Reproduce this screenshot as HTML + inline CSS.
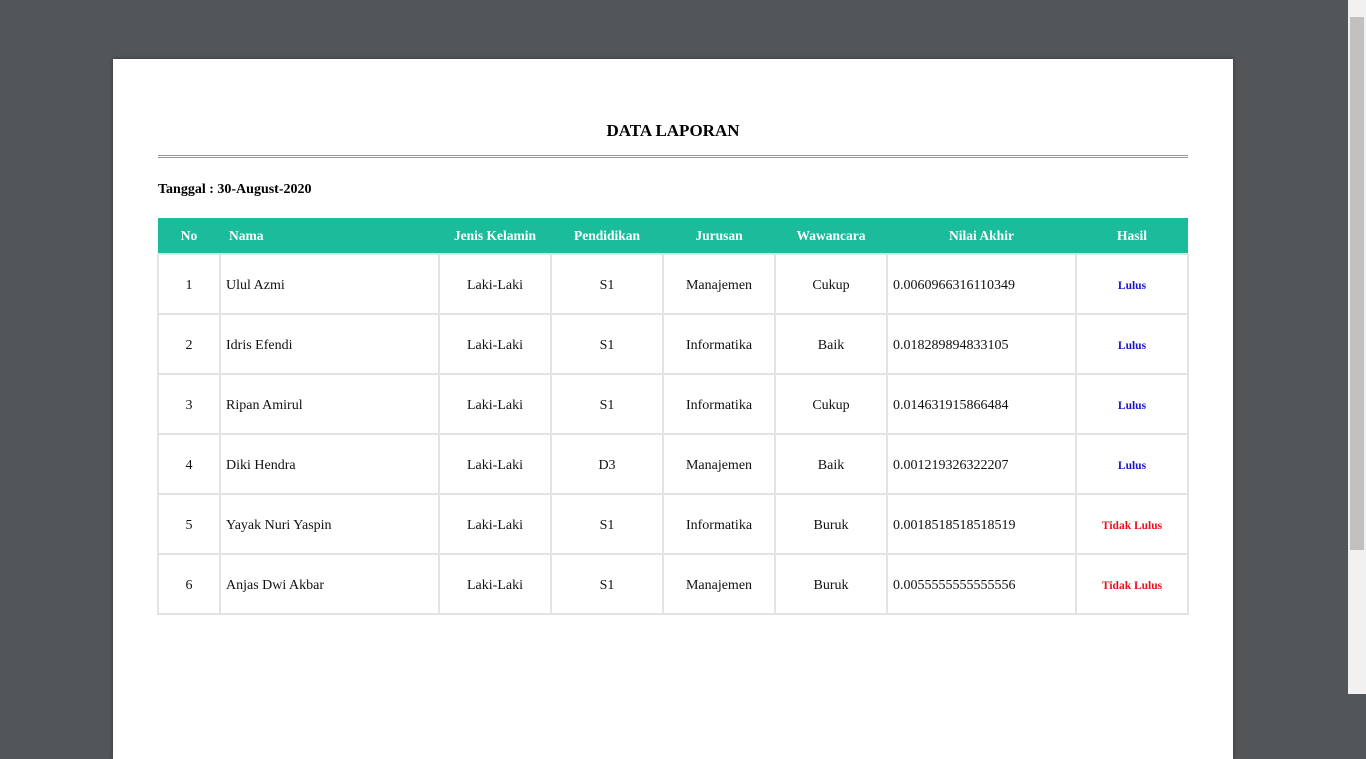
<!DOCTYPE html>
<html><head><meta charset="utf-8"><style>
html,body{margin:0;padding:0;width:1366px;height:694px;overflow:hidden;background:#525659;font-family:"Liberation Serif",serif;}
.sb{position:absolute;left:1348px;top:0;width:18px;height:694px;background:#f1f1f1;}
.th{position:absolute;left:1350px;top:17px;width:14px;height:533px;background:#c1c1c1;}
.page{position:absolute;left:113px;top:59px;width:1120px;height:700px;background:#fff;box-shadow:0 0 4px rgba(0,0,0,.4);}
.title{position:absolute;left:0;width:1120px;top:62px;text-align:center;font-weight:bold;font-size:17px;color:#000;}
.hr{position:absolute;left:45px;width:1030px;top:96px;height:1px;border-top:1px solid #999;border-bottom:1px solid #999;}
.tgl{position:absolute;left:45px;top:123px;font-weight:bold;font-size:14px;}
table{position:absolute;left:44px;top:159px;border-collapse:collapse;table-layout:fixed;width:1030px;font-size:14px;}
th{background:#1abc9c;color:#fff;height:34px;padding:1px 0 0;font-weight:bold;font-size:13.5px;}
td{border:2px solid #e3e3e3;height:54px;padding:4px 0 0;text-align:center;color:#111;}
td.l,th.l{text-align:left;padding-left:5px;}
.ok{color:#1a16c8;font-weight:bold;font-size:11.5px;}
.no{color:#e8121c;font-weight:bold;font-size:11.5px;}
</style></head><body>
<div class="page">
<div class="title">DATA LAPORAN</div>
<div class="hr"></div>
<div class="tgl">Tanggal : 30-August-2020</div>
<table>
<colgroup><col style="width:62px"><col style="width:219px"><col style="width:112px"><col style="width:112px"><col style="width:112px"><col style="width:112px"><col style="width:189px"><col style="width:112px"></colgroup>
<tr><th>No</th><th class="l" style="padding-left:9px">Nama</th><th>Jenis Kelamin</th><th>Pendidikan</th><th>Jurusan</th><th>Wawancara</th><th>Nilai Akhir</th><th>Hasil</th></tr>
<tr><td>1</td><td class="l">Ulul Azmi</td><td>Laki-Laki</td><td>S1</td><td>Manajemen</td><td>Cukup</td><td class="l">0.0060966316110349</td><td class="ok">Lulus</td></tr>
<tr><td>2</td><td class="l">Idris Efendi</td><td>Laki-Laki</td><td>S1</td><td>Informatika</td><td>Baik</td><td class="l">0.018289894833105</td><td class="ok">Lulus</td></tr>
<tr><td>3</td><td class="l">Ripan Amirul</td><td>Laki-Laki</td><td>S1</td><td>Informatika</td><td>Cukup</td><td class="l">0.014631915866484</td><td class="ok">Lulus</td></tr>
<tr><td>4</td><td class="l">Diki Hendra</td><td>Laki-Laki</td><td>D3</td><td>Manajemen</td><td>Baik</td><td class="l">0.001219326322207</td><td class="ok">Lulus</td></tr>
<tr><td>5</td><td class="l">Yayak Nuri Yaspin</td><td>Laki-Laki</td><td>S1</td><td>Informatika</td><td>Buruk</td><td class="l">0.0018518518518519</td><td class="no">Tidak Lulus</td></tr>
<tr><td>6</td><td class="l">Anjas Dwi Akbar</td><td>Laki-Laki</td><td>S1</td><td>Manajemen</td><td>Buruk</td><td class="l">0.0055555555555556</td><td class="no">Tidak Lulus</td></tr>
</table>
</div>
<div class="sb"></div><div class="th"></div>
</body></html>
